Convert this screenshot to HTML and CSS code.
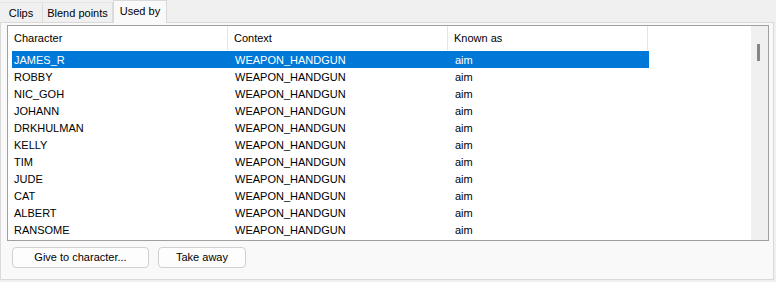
FILE: index.html
```html
<!DOCTYPE html>
<html lang="en">
<head>
    <meta charset="UTF-8">
    <title>Used by</title>
    <link rel="stylesheet" href="styles.css">
</head>
<body>
    <div class="tabs">
        <div class="tab tab-clips">Clips</div>
        <div class="tab tab-blend">Blend points</div>
        <div class="tab tab-used active">Used by</div>
    </div>

    <div class="panel">
        <div class="list">
            <div class="list-body">
                <div class="header">
                    <div class="hcell col1">Character</div>
                    <div class="hcell col2">Context</div>
                    <div class="hcell col3">Known as</div>
                </div>
                <div class="row selected"><span>JAMES_R</span><span>WEAPON_HANDGUN</span><span>aim</span></div>
                <div class="row"><span>ROBBY</span><span>WEAPON_HANDGUN</span><span>aim</span></div>
                <div class="row"><span>NIC_GOH</span><span>WEAPON_HANDGUN</span><span>aim</span></div>
                <div class="row"><span>JOHANN</span><span>WEAPON_HANDGUN</span><span>aim</span></div>
                <div class="row"><span>DRKHULMAN</span><span>WEAPON_HANDGUN</span><span>aim</span></div>
                <div class="row"><span>KELLY</span><span>WEAPON_HANDGUN</span><span>aim</span></div>
                <div class="row"><span>TIM</span><span>WEAPON_HANDGUN</span><span>aim</span></div>
                <div class="row"><span>JUDE</span><span>WEAPON_HANDGUN</span><span>aim</span></div>
                <div class="row"><span>CAT</span><span>WEAPON_HANDGUN</span><span>aim</span></div>
                <div class="row"><span>ALBERT</span><span>WEAPON_HANDGUN</span><span>aim</span></div>
                <div class="row"><span>RANSOME</span><span>WEAPON_HANDGUN</span><span>aim</span></div>
            </div>
            <div class="scrollbar"><div class="thumb"></div></div>
        </div>

        <div class="buttons">
            <button class="btn btn-give">Give to character...</button>
            <button class="btn btn-take">Take away</button>
        </div>
    </div>
</body>
</html>
```

FILE: styles.css
```css
body {
    margin: 0;
    background: #f0f0f0;
    color: #000;
    font: 400 11px/1 'Liberation Sans', Arial, sans-serif;
    width: 776px;
    height: 282px;
    overflow: hidden;
}

/* tab strip */
.tabs {
    display: flex;
    align-items: flex-end;
    height: 22px;
}

.tab {
    box-sizing: border-box;
    height: 20px;
    line-height: 20px;
    text-align: center;
    border-right: 1px solid #dcdcdc;
    border-top: 1px solid #e6e6e6;
    background: #f0f0f0;
}

.tab-clips {
    width: 43px;
}

.tab-blend {
    width: 70px;
}

.tab-used {
    width: 54px;
}

.tab.active {
    height: 23px;
    line-height: 20px;
    margin-bottom: -1px;
    background: #f9f9f9;
    border: 1px solid #d9d9d9;
    border-bottom: none;
    position: relative;
    z-index: 2;
}

/* tab page */
.panel {
    box-sizing: border-box;
    width: 774px;
    border: 1px solid #d9d9d9;
    background: #f9f9f9;
    padding: 2px 0 11px 6px;
}

.list {
    box-sizing: border-box;
    width: 762px;
    height: 216px;
    border: 1px solid #a0a0a0;
    background: #fff;
    display: flex;
}

.list-body {
    flex: 1;
}

.header {
    display: grid;
    grid-template-columns: 220px 220px 200px;
    height: 24px;
    margin-bottom: 1px;
}

.hcell {
    border-right: 1px solid #e5e5e5;
    padding-left: 6px;
    padding-top: 1px;
    line-height: 23px;
}

.row {
    box-sizing: border-box;
    display: grid;
    grid-template-columns: 216px 220px 201px;
    width: 637px;
    margin-left: 4px;
    height: 17px;
    padding-top: 1px;
    line-height: 16px;
    white-space: nowrap;
}

.row span:first-child {
    padding-left: 2px;
}

.row span + span {
    padding-left: 7px;
}

.row.selected {
    background: #0078d7;
    color: #fff;
}

.scrollbar {
    width: 17px;
    background: #f0f0f0;
    padding-top: 18px;
    box-sizing: border-box;
}

.thumb {
    width: 3px;
    height: 17px;
    margin-left: 6px;
    background: #858585;
}

/* buttons under the list */
.buttons {
    display: flex;
    gap: 9px;
    margin: 6px 0 0 5px;
}

.btn {
    box-sizing: border-box;
    height: 21px;
    padding: 0;
    background: #fdfdfd;
    border: 1px solid #d0d0d0;
    border-radius: 4px;
    font: 400 11px/19px 'Liberation Sans', Arial, sans-serif;
    color: #000;
}

.btn-give {
    width: 137px;
}

.btn-take {
    width: 88px;
}
```
